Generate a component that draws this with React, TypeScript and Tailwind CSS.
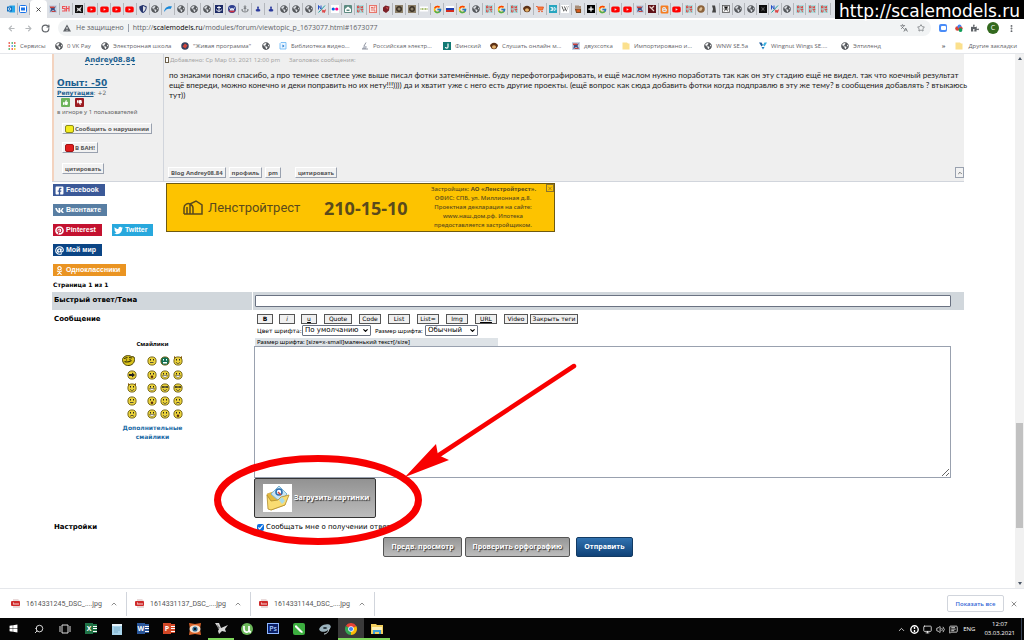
import type { ReactNode } from 'react';
import { FcGoogle } from 'react-icons/fc';
import {
  FaAnchor,
  FaArrowLeft,
  FaArrowRight,
  FaAt,
  FaBlogger,
  FaFacebookSquare,
  FaGlobeAmericas,
  FaOdnoklassniki,
  FaPinterest,
  FaPuzzlePiece,
  FaShieldAlt,
  FaThumbsDown,
  FaThumbsUp,
  FaTwitter,
  FaVk,
  FaWikipediaW,
  FaWindows,
  FaYoutube,
} from 'react-icons/fa';
import {
  ChevronDown,
  ChevronUp,
  EllipsisVertical,
  Languages,
  MessageSquareText,
  Monitor,
  RotateCw,
  Search,
  Star,
  Volume2,
  X,
} from 'lucide-react';

const tabsLeft =
  'plane sh black yt yt yt yt shield globe swoosh globe globe globe navy round anchor spade spade globe globe globe nw dots house ab red maroon gear gear scale google flag google globe ab google ab monkey cart 3d wiki hand'.split(
    ' '
  );
const tabsRight =
  'plus google yt yt plane wine blogger yt ab coin figure man globe globe cross nw globe ab ab ab'.split(
    ' '
  );

const bookmarks = [
  { icon: 'apps', label: 'Сервисы', width: 'w-[47px]' },
  { icon: 'globe', label: '0 VK Pay', width: 'w-[46px]' },
  { icon: 'globe', label: 'Электронная школа', width: 'w-[80px]' },
  { icon: 'live', label: '"Живая программа"', width: 'w-[81px]' },
  { icon: 'globe', label: '', width: 'w-[17px]' },
  { icon: 'video', label: 'Библиотека видео...', width: 'w-[82px]' },
  { icon: 'school', label: 'Российская электр...', width: 'w-[82px]' },
  { icon: 'finnish', label: 'Финский', width: 'w-[47px]' },
  { icon: 'monkey', label: 'Слушать онлайн м...', width: 'w-[82px]' },
  { icon: 'plane', label: 'двухсотка', width: 'w-[50px]' },
  { icon: 'folder', label: 'Импортировано и...', width: 'w-[82px]' },
  { icon: 'globe', label: 'WNW SE.5a', width: 'w-[55px]' },
  { icon: 'wings', label: 'Wingnut Wings SE....', width: 'w-[82px]' },
  { icon: 'globe', label: 'Элтиленд', width: 'w-[50px]' },
];

const downloads = [
  '1614331245_DSC_....jpg',
  '1614331137_DSC_....jpg',
  '1614331144_DSC_....jpg',
];

export default function App() {
  return (
    <div className="relative flex min-h-screen flex-col overflow-hidden bg-white font-['DejaVu_Sans',sans-serif] text-[7px] leading-[10px] text-black">
      <BrowserHeader />
      <div className="flex flex-1">
        <main className="min-w-0 flex-1 pr-[51px] pl-[52px]">
          <Post />
          <ShareRow />
          <p className="h-3 text-[6px] font-bold">
            <span className="pl-px">Страница 1 из 1</span>
          </p>
          <ReplyForm />
        </main>
        <Scrollbar />
      </div>
      <Downloads />
      <Taskbar />
      <Marker />
      <div className="absolute top-0 right-0 flex h-[19px] w-[189px] items-center justify-center bg-black pt-[3px] text-[17px] text-white">
        http://scalemodels.ru
      </div>
    </div>
  );
}

/* Browser */

function BrowserHeader() {
  return (
    <header className="border-b border-gray-200 font-['Open_Sans',sans-serif] text-[7px] text-[#5f6368]">
      <div className="flex h-[18px] items-center bg-[#dee1e6] pr-[193px] pl-[5px]">
        <div className="flex w-[25px]">
          <Tab kind="outlook" />
          <Tab kind="mail" />
        </div>
        <div className="flex w-[17px] items-center justify-center self-stretch rounded-t bg-white">
          <X size={7} color="#333" strokeWidth={3} />
        </div>
        <div className="flex flex-[538]">
          {tabsLeft.map((kind, index) => (
            <Tab key={index} kind={kind} />
          ))}
        </div>
        <div className="flex flex-[246]">
          {tabsRight.map((kind, index) => (
            <Tab key={index} kind={kind} />
          ))}
        </div>
      </div>

      <div className="flex h-5 items-center gap-2 pr-2 pl-2">
        <FaArrowLeft size={7} color="#b5b8bb" />
        <FaArrowRight size={7} color="#b5b8bb" className="ml-[2px]" />
        <RotateCw size={9} strokeWidth={3} className="ml-px" />
        <div className="flex h-4 flex-1 items-center rounded-full bg-[#f1f3f4] px-[5px]">
          <svg width="8" height="8" viewBox="0 0 16 16">
            <path d="M8 1l8 14H0z" fill="#5f6368" />
            <path d="M8 6v4M8 11.5v2" stroke="#fff" strokeWidth="1.8" />
          </svg>
          <span className="ml-[5px]">Не защищено</span>
          <span className="mx-[4px] h-2 w-px bg-gray-400" />
          <span>
            http://<span className="text-black">scalemodels.ru</span>
            /modules/forum/viewtopic_p_1673077.html#1673077
          </span>
          <Languages size={8} className="ml-auto" />
          <Star size={8} className="mr-px ml-[9px]" />
        </div>
        <span className="flex h-2 w-2 items-center justify-center rounded-xs bg-[#4a8cf7]">
          <span className="h-[4px] w-[5px] rounded-[1px] bg-white" />
        </span>
        <svg width="8" height="8" viewBox="0 0 8 8">
          <circle cx="2.5" cy="4.5" r="2.3" fill="#db4437" />
          <circle cx="4.5" cy="2.5" r="2" fill="#4285f4" />
          <circle cx="5.8" cy="4.2" r="1.8" fill="#db4437" />
          <circle cx="5.5" cy="6" r="1.9" fill="#0f9d58" />
        </svg>
        <FaPuzzlePiece size={8} />
        <span className="flex h-3 w-3 items-center justify-center rounded-full bg-[#33691e] text-white">
          C
        </span>
        <EllipsisVertical size={9} strokeWidth={3} />
      </div>

      <nav className="flex h-[15px] items-center pr-[7px] pl-2 text-[6px] font-medium">
        {bookmarks.map((item, index) => (
          <a
            key={index}
            href="#"
            className={`flex shrink-0 items-center gap-1 whitespace-nowrap ${item.width}`}
          >
            <Favicon kind={item.icon} />
            {item.label}
          </a>
        ))}
        <span className="ml-auto font-bold">»</span>
        <a href="#" className="ml-[10px] flex items-center gap-[5px]">
          <Favicon kind="folder" />
          Другие закладки
        </a>
      </nav>
    </header>
  );
}

function Tab({ kind }: { kind: string }) {
  return (
    <span className="flex h-3 min-w-0 flex-1 items-center justify-center border-r border-[#b4b7bc]">
      <Favicon kind={kind} />
    </span>
  );
}

function Favicon({ kind }: { kind: string }) {
  const size = 8;
  switch (kind) {
    case 'globe':
      return <FaGlobeAmericas size={size} color="#55585c" className="shrink-0" />;
    case 'yt':
      return <FaYoutube size={9} color="#f00" className="shrink-0" />;
    case 'google':
      return <FcGoogle size={9} className="shrink-0" />;
    case 'shield':
      return <FaShieldAlt size={size} color="#27366f" className="shrink-0" />;
    case 'anchor':
      return <FaAnchor size={size} color="#7d8084" className="shrink-0" />;
    case 'blogger':
      return <FaBlogger size={9} color="#f57d20" className="shrink-0" />;
  }
  return (
    <svg width={size} height={size} viewBox="0 0 16 16" className="shrink-0">
      {drawings[kind]}
    </svg>
  );
}

const drawings: Record<string, ReactNode> = {
  outlook: (
    <>
      <rect x="5" y="1" width="11" height="14" fill="#28a8ea" />
      <rect y="3" width="10" height="10" rx="1" fill="#0f6cbd" />
      <circle cx="5" cy="8" r="2.5" fill="none" stroke="#fff" strokeWidth="1.5" />
    </>
  ),
  mail: (
    <>
      <rect x="1" y="1" width="14" height="14" rx="2" fill="#fff" stroke="#1a73e8" strokeWidth="2" />
      <rect x="4" y="5" width="8" height="6" fill="#1a73e8" />
    </>
  ),
  plane: (
    <>
      <rect width="16" height="16" fill="#c9d3e2" />
      <path d="M1 3l7 3 6-4-3 6 4 6-7-4-6 4 2-6z" fill="#3c4f86" />
      <path d="M2 3h9v3H2zM5 12h8v2H5z" fill="#c8423e" />
    </>
  ),
  sh: (
    <path d="M7 3H1v4h5v5H0M9 2v11M9 7h5M14 2v11" fill="none" stroke="#ee5358" strokeWidth="2.4" />
  ),
  black: (
    <>
      <rect width="16" height="16" fill="#111" />
      <path d="M3 5l5 2 6-5-3 7 2 5-6-3-4 3 2-5z" fill="#ddd" />
    </>
  ),
  swoosh: <path d="M0 14C1 6 7 1 16 3l-3 5C8 6 4 8 0 14z" fill="#1787d8" />,
  navy: (
    <>
      <rect width="16" height="16" fill="#1d2b66" />
      <path d="M8 2v11M4 5h8M3 9c1 5 9 5 10 0" fill="none" stroke="#fff" strokeWidth="1.8" />
    </>
  ),
  round: (
    <>
      <circle cx="8" cy="8" r="8" fill="#2f3f8f" />
      <path d="M1 11h14a8 8 0 0 1-14 0z" fill="#d02f3f" />
      <path d="M3 5l3 6 2-5 2 5 3-6" fill="none" stroke="#fff" strokeWidth="1.8" />
    </>
  ),
  spade: <path d="M8 2l2 3-1 2 4 3-2 3H5l-2-3 4-3-1-2z" fill="#2b3a9c" />,
  nw: (
    <>
      <path d="M1 9V1l5 7V1" fill="none" stroke="#2350c7" strokeWidth="2" />
      <path d="M1 15L14 1" stroke="#1ba0a0" strokeWidth="2" />
      <path d="M8 9l2 6 2-5 1 5 2-6" fill="none" stroke="#d33" strokeWidth="1.8" />
    </>
  ),
  dots: (
    <>
      <rect width="16" height="16" fill="#fff" />
      <circle cx="4.5" cy="8" r="3.2" fill="#0063dc" />
      <circle cx="11.5" cy="8" r="3.2" fill="#ff0084" />
    </>
  ),
  house: (
    <>
      <rect width="16" height="16" rx="2" fill="#5c8a80" />
      <path d="M2 8l6-5 6 5v6H2z" fill="#fff" />
      <path d="M5 9h6v3H5z" fill="#5c8a80" />
    </>
  ),
  ab: (
    <>
      <rect width="16" height="16" fill="#a9dcdc" />
      <path d="M3 7V2h3v5M3 5h3M10 2v5M13 2v5M10 5h3M3 9v5h3v-5M9 9h5l-3 3 3 2" fill="none" stroke="#d9413f" strokeWidth="1.7" />
    </>
  ),
  red: (
    <>
      <rect x="1" y="1" width="14" height="14" fill="#fbe3df" stroke="#e8756b" strokeWidth="2" />
      <path d="M4 5h4M6 5v7M10 4v8M10 4h3M10 12h3" stroke="#e05a50" strokeWidth="1.6" />
    </>
  ),
  maroon: (
    <>
      <path d="M2 5l5-4 8 2-1 8-6 5-6-4z" fill="#7b2028" />
      <path d="M7 4l6 1-2 4z" fill="#c94a50" />
    </>
  ),
  gear: (
    <>
      <rect width="16" height="16" fill="#8c7f68" />
      <circle cx="8" cy="8" r="4.5" fill="none" stroke="#3b3227" strokeWidth="3" />
    </>
  ),
  scale: (
    <>
      <rect y="3" width="16" height="10" fill="#fff" />
      <path d="M1 8h14" stroke="#8dab45" strokeWidth="3" strokeDasharray="2 1" />
    </>
  ),
  flag: (
    <>
      <rect y="2" width="16" height="4" fill="#fff" />
      <rect y="6" width="16" height="4" fill="#1d3fb0" />
      <rect y="10" width="16" height="4" fill="#d52b1e" />
    </>
  ),
  monkey: (
    <>
      <circle cx="3" cy="7" r="3" fill="#7a431c" />
      <circle cx="13" cy="7" r="3" fill="#7a431c" />
      <circle cx="8" cy="8" r="6.5" fill="#5d3216" />
      <ellipse cx="8" cy="10" rx="4" ry="3.5" fill="#e6b36c" />
    </>
  ),
  cart: (
    <>
      <path d="M0 3h3l2 7h8l2-6H4" fill="#f6813e" stroke="#e84b1a" strokeWidth="1.6" />
      <circle cx="6" cy="13" r="1.6" fill="#e84b1a" />
      <circle cx="12" cy="13" r="1.6" fill="#e84b1a" />
    </>
  ),
  '3d': (
    <>
      <rect width="16" height="16" fill="#27a5bf" />
      <path d="M3 5h4v6H3M4 8h3M10 5v6c5 0 5-6 0-6z" fill="none" stroke="#fff" strokeWidth="1.6" />
    </>
  ),
  wiki: (
    <>
      <rect width="16" height="16" fill="#fff" />
      <FaWikipediaW size={16} color="#222" />
    </>
  ),
  hand: (
    <path d="M4 6V1M8 6V1M12 6V2M3 8h10v7H5z" stroke="#7a4a20" strokeWidth="2.2" fill="#d75a20" />
  ),
  plus: (
    <>
      <rect width="16" height="16" fill="#000" />
      <path d="M8 3v10M3 8h10" stroke="#fff" strokeWidth="2.5" />
    </>
  ),
  wine: (
    <>
      <rect width="16" height="16" fill="#5f1218" />
      <path d="M3 3l9 9M12 2L7 7" stroke="#e7cfc9" strokeWidth="2.4" />
    </>
  ),
  coin: (
    <>
      <circle cx="8" cy="8" r="7.5" fill="#8b623b" />
      <path d="M4 8l4-4 3 2-2 5-4 1z" fill="#e1c298" />
    </>
  ),
  figure: <path d="M4 1h6l1 5 1 9H4l2-7z" fill="#444" />,
  man: (
    <>
      <rect x="1" y="1" width="14" height="14" fill="#fff" stroke="#555" strokeWidth="1.6" />
      <path d="M4 3l4 5 4-5M8 8l-4 5M8 8l4 5M3 8h10" stroke="#333" strokeWidth="1.6" />
    </>
  ),
  cross: (
    <>
      <rect width="16" height="16" fill="#0b0b0b" />
      <path d="M4 3l4 3 4-3-2 5 2 5-4-3-4 3 2-5z" fill="#555" />
    </>
  ),
  apps: (
    <>
      <path d="M1 2h3M1 8h3" stroke="#ea4335" strokeWidth="3" />
      <path d="M7 2h3M12 8h3M1 14h3" stroke="#34a853" strokeWidth="3" />
      <path d="M12 2h3M7 14h3" stroke="#ea4335" strokeWidth="3" />
      <path d="M7 8h3" stroke="#4285f4" strokeWidth="3" />
      <path d="M12 14h3" stroke="#fbbc05" strokeWidth="3" />
    </>
  ),
  live: (
    <>
      <circle cx="8" cy="8" r="7.5" fill="#34405e" />
      <path d="M3 9l5-6 5 4-4 6z" fill="#d2453a" />
    </>
  ),
  video: (
    <>
      <path d="M4 1h10v13H2V3z" fill="#eaf5ff" stroke="#64b5f6" strokeWidth="1.6" />
      <path d="M7 5l4 3-4 3z" fill="#1976d2" />
    </>
  ),
  school: (
    <>
      <path d="M2 14l4-7 6 2-2 5z" fill="#b9bdc7" />
      <path d="M6 8l4-7M2 14h12" stroke="#767b8b" strokeWidth="1.6" />
    </>
  ),
  finnish: (
    <>
      <rect width="16" height="16" fill="#127a74" />
      <path d="M10 3v7c0 3-5 3-5 0" fill="none" stroke="#fff" strokeWidth="2.4" />
    </>
  ),
  folder: <path d="M1 1h9l2 2h3v12H1z" fill="#fbe08d" />,
  wings: (
    <>
      <path d="M0 1h5l3 5-3 3z" fill="#1f5f9f" />
      <path d="M16 1h-5L8 6l3 3z" fill="#39b0e0" />
      <path d="M5 10h6l-3 5z" fill="#1f7fc0" />
    </>
  ),
};

function Scrollbar() {
  return (
    <div className="flex w-[9px] flex-col items-center justify-between bg-[#f1f1f1] py-[3px]">
      <span className="border-x-2 border-b-[3px] border-x-transparent border-b-gray-600" />
      <div className="flex flex-1 flex-col self-stretch">
        <div className="flex-[364]" />
        <div className="mx-px flex-[105] bg-[#c1c1c1]" />
        <div className="flex-[54]" />
      </div>
      <span className="border-x-2 border-t-[3px] border-x-transparent border-t-gray-600" />
    </div>
  );
}

/* Forum */

function SmallButton({ children }: { children: ReactNode }) {
  return (
    <button
      type="button"
      className="flex h-[11px] items-center gap-px border border-t-white border-r-gray-400 border-b-gray-400 border-l-white bg-[#f2f2f2] px-[2px] font-['Noto_Sans',sans-serif] text-[6px] font-bold whitespace-nowrap text-[#555]"
    >
      {children}
    </button>
  );
}

function Post() {
  return (
    <article className="flex h-[128px] border-b border-gray-300 bg-[#efefef]">
      <div className="flex w-[112px] shrink-0 flex-col items-start border-r border-l-2 border-r-gray-300 border-l-[#f3d3bf] pl-[3px] text-[6px] text-[#666]">
        <a
          href="#"
          className="mt-[2px] self-center border-b border-dashed border-[#1c5f8f] text-[7px] leading-[8px] font-bold text-[#1c5f8f]"
        >
          Andrey08.84
        </a>
        <a href="#" className="mt-3 text-[9px] leading-3 font-bold text-[#1c5f8f] underline">
          Опыт: -50
        </a>
        <p className="leading-2">
          <a href="#" className="font-bold text-[#1c5f8f] underline">
            Репутация
          </a>
          : +2
        </p>
        <div className="mt-px flex gap-[5px] pl-1">
          <button type="button" aria-label="Плюс" className="flex h-[9px] w-[9px] items-center justify-center rounded-[1px] bg-[#6db35b]">
            <FaThumbsUp size={5} color="#fff" />
          </button>
          <button type="button" aria-label="Минус" className="flex h-[9px] w-[9px] items-center justify-center rounded-[1px] bg-[#9c1c22]">
            <FaThumbsDown size={5} color="#fff" />
          </button>
        </div>
        <p className="font-['Noto_Sans',sans-serif]">в игноре у 1 пользователей</p>
        <div className="mt-[6px] flex flex-col items-start gap-[8px] pl-[5px]">
          <SmallButton>
            <span className="h-2 w-[9px] rounded-xs border border-[#8a8a1c] bg-[#f4ec1e]" />
            Сообщить о нарушении
          </SmallButton>
          <SmallButton>
            <span className="h-2 w-[9px] rounded-xs border border-[#a01414] bg-[#e01c1c]" />В БАН!
          </SmallButton>
          <div className="mt-[2px]">
            <SmallButton>цитировать</SmallButton>
          </div>
        </div>
      </div>

      <div className="flex min-w-0 flex-1 flex-col">
        <div className="flex h-3 items-center gap-[9px] pl-px font-['Noto_Sans',sans-serif] text-[6px] text-[#a5a5a5]">
          <span className="flex items-center gap-px">
            <span className="h-[6px] w-[4px] border border-[#6b5f4a] bg-white" />
            Добавлено: Ср Мар 03, 2021 12:00 pm
          </span>
          <span>Заголовок сообщения:</span>
        </div>
        <p className="pt-1 pl-[5px] font-['Lato','Liberation_Sans',sans-serif] text-[8px] whitespace-nowrap text-[#222]">
          по знаками понял спасибо, а про темнее светлее уже выше писал фотки затемнённые. буду
          перефотографировать, и ещё маслом нужно поработать так как он эту стадию ещё не видел.
          так что коечный результат
          <br />
          ещё впереди, можно конечно и деки поправить но их нету!!!)))) да и хватит уже с него есть
          другие проекты. (ещё вопрос как сюда добавить фотки когда подправлю в эту же тему? в
          сообщения добавлять ? втыкаюсь
          <br />
          тут))
        </p>
        <div className="mt-auto mb-[3px] flex items-center gap-[3px] pl-1">
          <SmallButton>Blog Andrey08.84</SmallButton>
          <SmallButton>профиль</SmallButton>
          <SmallButton>pm</SmallButton>
          <div className="ml-[11px]">
            <SmallButton>цитировать</SmallButton>
          </div>
          <button
            type="button"
            aria-label="Наверх"
            className="ml-auto flex h-[11px] w-[9px] items-center justify-center border border-gray-400 bg-[#f2f2f2]"
          >
            <ChevronUp size={6} />
          </button>
        </div>
      </div>
    </article>
  );
}

function ShareLink({ color, icon, label }: { color: string; icon: ReactNode; label: string }) {
  return (
    <a
      href="#"
      className={`flex h-3 items-center gap-[2px] pr-[6px] pl-[2px] font-['Liberation_Sans',sans-serif] text-[7px] font-bold text-white ${color}`}
    >
      {icon}
      {label}
    </a>
  );
}

function ShareRow() {
  return (
    <div className="flex h-[98px] items-start">
      <div className="flex w-[114px] flex-col items-start gap-2 pt-[2px] pl-px">
        <ShareLink color="bg-[#3b5998]" icon={<FaFacebookSquare size={9} />} label="Facebook" />
        <ShareLink color="bg-[#587ea3]" icon={<FaVk size={9} />} label="Вконтакте" />
        <div className="flex gap-[10px]">
          <ShareLink color="bg-[#c31230]" icon={<FaPinterest size={9} />} label="Pinterest" />
          <ShareLink color="bg-[#28a8dd]" icon={<FaTwitter size={9} />} label="Twitter" />
        </div>
        <ShareLink color="bg-[#0b4585]" icon={<FaAt size={9} />} label="Мой мир" />
        <ShareLink color="bg-[#ea9422]" icon={<FaOdnoklassniki size={9} />} label="Одноклассники" />
      </div>

      {/* рекламный баннер */}
      <aside className="relative mt-px flex h-[49px] w-[389px] items-center border border-[#6f5a10] bg-[#fdc300] font-['Noto_Sans',sans-serif] text-[#5a4a1c]">
        <svg width="21" height="16" viewBox="0 0 21 16" className="ml-4 shrink-0">
          <path
            d="M1 14V8c0-4 4-5 6-4s3 2 3 4v6M4 14V7M7 14V4l6-3 6 4v9H1"
            fill="none"
            stroke="currentColor"
            strokeWidth="1.5"
          />
        </svg>
        <span className="ml-1 w-[116px] font-['Roboto',sans-serif] text-[13px]">
          Ленстройтрест
        </span>
        <span className="text-[18px] font-bold">210-15-10</span>
        <p className="ml-auto w-[123px] pr-[19px] text-center text-[6px] leading-[9px] font-medium whitespace-nowrap">
          Застройщик: <b>АО «Ленстройтрест».</b>
          <br />
          ОФИС: СПБ, ул. Миллионная д.8.
          <br />
          Проектная декларация на сайте:
          <br />
          www.наш.дом.рф. Ипотека
          <br />
          предоставляется застройщиком.
        </p>
        <button
          type="button"
          aria-label="Закрыть рекламу"
          className="absolute top-0 right-0 flex h-2 w-2 items-center justify-center border border-[#8a7430]"
        >
          <X size={7} />
        </button>
      </aside>
    </div>
  );
}

function TagButton({ className = '', children }: { className?: string; children: ReactNode }) {
  return (
    <button
      type="button"
      className={`h-[10px] border border-[#555] bg-[#f0f0f0] text-[6px] leading-[8px] whitespace-nowrap text-black ${className}`}
    >
      {children}
    </button>
  );
}

function FontSelect({ id, option, width }: { id: string; option: string; width: string }) {
  return (
    <span className={`relative flex ${width}`}>
      <select
        id={id}
        className="h-[11px] w-full appearance-none rounded-[1px] border border-gray-500 bg-white pl-[2px] text-[7px] leading-[9px]"
      >
        <option>{option}</option>
      </select>
      <ChevronDown size={7} strokeWidth={4} className="pointer-events-none absolute top-[2px] right-[2px]" />
    </span>
  );
}

function GrayButton({ children }: { children: ReactNode }) {
  return (
    <button
      type="button"
      className="h-5 rounded-xs border border-[#555] bg-linear-to-b from-[#979797] to-[#bdbdbd] px-[7px] text-[7px] text-white text-shadow-[1px_1px_1px_#333]"
    >
      {children}
    </button>
  );
}

function ReplyForm() {
  return (
    <form className="grid grid-cols-[201px_1fr]" onSubmit={(e) => e.preventDefault()}>
      <label
        htmlFor="subject"
        className="border-r border-white bg-[#d1d7dc] pt-[3px] pl-[2px] font-bold"
      >
        Быстрый ответ/Тема
      </label>
      <div className="flex h-[18px] items-center bg-[#d1d7dc] pr-[13px] pl-[2px]">
        <input
          id="subject"
          type="text"
          className="h-3 w-full rounded-[1px] border border-gray-500 bg-white px-1"
        />
      </div>

      <div className="flex flex-col">
        <label htmlFor="message" className="pt-1 pl-[2px] font-bold">
          Сообщение
        </label>
        <Smilies />
      </div>
      <div className="pr-[13px] pl-px">
        <div className="flex gap-[7px] pt-1 pl-[3px]">
          <div className="flex gap-[6px]">
            <TagButton className="w-4 font-bold">B</TagButton>
            <TagButton className="w-4 italic">i</TagButton>
            <TagButton className="w-4 underline">u</TagButton>
          </div>
          <TagButton className="w-7">Quote</TagButton>
          <TagButton className="w-[22px]">Code</TagButton>
          <TagButton className="w-[22px]">List</TagButton>
          <TagButton className="w-[22px]">List=</TagButton>
          <TagButton className="w-[22px]">Img</TagButton>
          <TagButton className="w-[22px] underline">URL</TagButton>
          <div className="flex gap-[2px]">
            <TagButton className="w-[24px]">Video</TagButton>
            <TagButton className="w-[48px]">Закрыть теги</TagButton>
          </div>
        </div>
        <div className="flex items-center pt-px pl-[3px] text-[6px] whitespace-nowrap">
          <label htmlFor="color" className="w-[45px]">
            Цвет шрифта:
          </label>
          <FontSelect id="color" option="По умолчанию" width="w-[69px]" />
          <label htmlFor="size" className="ml-1 w-[50px] font-['Noto_Sans',sans-serif]">
            Размер шрифта:
          </label>
          <FontSelect id="size" option="Обычный" width="w-[53px]" />
        </div>
        <p className="mt-[2px] ml-px h-2 w-[243px] bg-[#dee3e7] pl-[2px] font-['Noto_Sans',sans-serif] text-[6px] leading-2">
          Размер шрифта: [size=x-small]маленький текст[/size]
        </p>
        <textarea id="message" className="block h-[132px] w-full border border-gray-400 bg-white p-1" />
        <button
          type="button"
          className="flex h-10 w-[122px] items-center gap-[2px] rounded-xs border border-[#333] bg-linear-to-b from-[#929292] to-[#bcbcbc] pl-2 font-['Open_Sans',sans-serif] text-[7px] font-bold whitespace-nowrap text-white text-shadow-[1px_1px_1px_#333]"
        >
          <span className="flex h-7 w-[29px] shrink-0 items-center justify-center bg-white">
            <FolderIcon />
          </span>
          Загрузить картинки
        </button>
      </div>

      <div className="pt-1 pl-[2px] font-bold">Настройки</div>
      <label className="flex items-center gap-[2px] pt-1 pl-1">
        <input type="checkbox" defaultChecked className="h-[7px] w-[7px] accent-[#0b6fe0]" />
        Сообщать мне о получении ответа
      </label>

      <div className="col-span-2 flex justify-center gap-[3px] pt-[5px] font-['Open_Sans',sans-serif] font-bold">
        <GrayButton>Предв. просмотр</GrayButton>
        <GrayButton>Проверить орфографию</GrayButton>
        <button
          type="submit"
          className="ml-[3px] h-5 rounded-xs border border-[#123a63] bg-linear-to-b from-[#3172b0] to-[#0f4278] px-[7px] text-[7px] text-white"
        >
          Отправить
        </button>
      </div>
    </form>
  );
}

function FolderIcon() {
  return (
    <svg width="25" height="26" viewBox="0 0 25 26">
      <path d="M2 9l6-2 2 2 9-2 1 13-14 5z" fill="#e3b83c" stroke="#c9a544" strokeWidth=".7" />
      <path d="M14 1l8 8-7 8-9-8z" fill="#c9e4f3" stroke="#7db4d0" />
      <circle cx="14" cy="7" r="3" fill="#fff" stroke="#2b6db0" strokeWidth="1.6" />
      <path d="M13 7l3 3" stroke="#d2453a" strokeWidth="1.5" />
      <path d="M2 10l1 14 3 1 14-5 4-10-8 2-3 3-7 1z" fill="#f9dc72" stroke="#b08c2a" strokeWidth=".8" />
      <path d="M17 12l3 4-3 3-3-4z" fill="#a9dbe8" />
    </svg>
  );
}

type Mood = 'smile' | 'grin' | 'sad' | 'oh' | 'flat' | 'cool' | 'arrow' | 'devil' | 'green' | 'big';

const smilies: Mood[] = [
  'big', 'flat', 'green', 'devil',
  'arrow', 'oh', 'grin', 'grin',
  'devil', 'grin', 'cool', 'cool',
  'flat', 'oh', 'smile', 'sad',
  'sad', 'grin', 'smile', 'oh',
];

function Smilies() {
  return (
    <div className="flex flex-col items-center pt-[15px] font-bold">
      <p className="font-['Noto_Sans',sans-serif] text-[6px]">Смайлики</p>
      <div className="mt-[5px] grid grid-cols-[26px_13px_13px_13px] items-center justify-items-center gap-y-[3px] pr-[2px]">
        {smilies.map((mood, index) => (
          <button key={index} type="button" aria-label={mood}>
            <Smiley mood={mood} />
          </button>
        ))}
      </div>
      <a href="#" className="mt-[4px] w-20 text-center text-[6px] leading-[9px] text-[#1c6ba5]">
        Дополнительные смайлики
      </a>
    </div>
  );
}

function Smiley({ mood }: { mood: Mood }) {
  if (mood === 'big') {
    return (
      <svg width="13" height="13" viewBox="0 0 26 26" className="mr-[7px] block">
        <path d="M1 11C2 4 12 1 19 5l5 1c3 6 0 16-10 17C6 24 1 18 1 11z" fill="#d9c21c" stroke="#4b4208" strokeWidth="2" />
        <path d="M4 9l7-2M14 7l6 1M5 15c5 2 9 1 14-2M9 11v2M16 10v2" fill="none" stroke="#3a3305" strokeWidth="2.2" />
      </svg>
    );
  }
  return (
    <svg width="10" height="10" viewBox="0 0 20 20" className="block">
      {mood === 'devil' && <path d="M2 8V0l6 4zM18 8V0l-6 4z" fill="#8a5a10" />}
      <circle cx="10" cy="10" r="8.2" fill={mood === 'green' ? '#0c7257' : '#ecd33a'} stroke="#6b5c10" strokeWidth="1.8" />
      {mood === 'arrow' ? (
        <path d="M4 8h6V5l6 5-6 5v-3H4z" fill="#222" />
      ) : (
        <>
          {mood === 'cool' ? (
            <path d="M4 7h5v2H4zM11 7h5v2h-5z" fill="#222" stroke="#222" />
          ) : (
            <path d="M7 6v3M13 6v3" stroke={mood === 'green' ? '#fff' : '#222'} strokeWidth="2" />
          )}
          {mood === 'flat' && <path d="M6 13h7" stroke="#333" strokeWidth="1.6" />}
          {mood === 'sad' && <path d="M6 15c2-3 6-3 8 0" fill="none" stroke="#333" strokeWidth="1.6" />}
          {mood === 'oh' && <circle cx="10" cy="13.5" r="2.6" fill="#5b2d0d" />}
          {mood === 'green' && <path d="M6 12h8v3H6z" fill="#fff" />}
          {mood === 'grin' && <path d="M5 11h10c-1 5-9 5-10 0z" fill="#fff" stroke="#333" />}
          {(mood === 'smile' || mood === 'cool' || mood === 'devil') && (
            <path d="M6 12c2 4 6 4 8 0" fill="none" stroke="#333" strokeWidth="1.6" />
          )}
        </>
      )}
    </svg>
  );
}

/* Красная пометка поверх страницы */
function Marker() {
  return (
    <svg
      width="364"
      height="186"
      viewBox="0 0 364 186"
      className="pointer-events-none absolute top-[362px] left-[214px]"
    >
      <ellipse cx="104" cy="138" rx="100.5" ry="41.5" fill="none" stroke="#f80000" strokeWidth="7" />
      <path d="M360 4L222 95" stroke="#f80000" strokeWidth="4.5" strokeLinecap="round" />
      <path d="M191 115L222 82l2 11 11 5z" fill="#f80000" />
    </svg>
  );
}

/* Downloads and taskbar */

function Downloads() {
  return (
    <div className="flex h-[30px] items-center border-t border-gray-200 pr-[6px] pl-[3px] font-['Open_Sans',sans-serif] text-[7px] text-[#555]">
      {downloads.map((name) => (
        <div key={name} className="flex h-6 w-[124px] items-center border-r border-gray-300 pl-2">
          <svg width="9" height="9" viewBox="0 0 9 9">
            <path d="M2 0h5l2 2v7H2z" fill="#e9dada" />
            <rect y="2" width="9" height="5" rx="1" fill="#cf2a2a" />
            <path d="M2 4h1v2M5 4v2M7 4v2" stroke="#fff" strokeWidth=".8" fill="none" />
          </svg>
          <span className="ml-[6px] flex-1 font-['Roboto',sans-serif] whitespace-nowrap">{name}</span>
          <ChevronUp size={8} className="mr-2" />
        </div>
      ))}
      <button
        type="button"
        className="ml-auto h-[17px] w-[57px] rounded-xs border border-gray-300 text-[6px] font-semibold text-[#3367d6]"
      >
        Показать все
      </button>
      <button type="button" aria-label="Закрыть" className="ml-[6px]">
        <X size={8} />
      </button>
    </div>
  );
}

const taskIcons: { name: string; icon: ReactNode; state?: string }[] = [
  { name: 'Пуск', icon: <FaWindows size={9} /> },
  { name: 'Поиск', icon: <Search size={10} className="-scale-x-100" /> },
  {
    name: 'Представление задач',
    icon: (
      <svg width="12" height="10" viewBox="0 0 12 10" fill="none" stroke="#ddd">
        <path d="M3 1h6v8H3zM1 2v6M11 2v6" />
      </svg>
    ),
  },
  { name: 'Excel', icon: <OfficeIcon color="bg-[#1f7246]" letter="X" /> },
  {
    name: 'Блокнот',
    icon: (
      <svg width="10" height="12" viewBox="0 0 10 12">
        <path d="M0 1h10v11H0z" fill="#a7d3ea" />
        <path d="M0 1h10v2H0z" fill="#e8f4fa" />
        <path d="M2 5h6M2 7h6M2 9h4" stroke="#6b9dbb" strokeWidth=".7" />
      </svg>
    ),
  },
  { name: 'Word', icon: <OfficeIcon color="bg-[#2a5699]" letter="W" /> },
  { name: 'PowerPoint', icon: <OfficeIcon color="bg-[#d24726]" letter="P" /> },
  {
    name: 'Просмотр',
    icon: (
      <svg width="12" height="12" viewBox="0 0 12 12">
        <path d="M0 0l6 1 6-1-1 6 1 6-6-1-6 1 1-6z" fill="#d9642a" />
        <ellipse cx="6" cy="6" rx="5.5" ry="3.8" fill="#f5e6d6" />
        <circle cx="6" cy="6" r="2.6" fill="#2b6690" />
        <circle cx="6" cy="6" r="1" fill="#000" />
      </svg>
    ),
  },
  {
    name: 'Самолёты',
    state: 'border-[#7fd85c]',
    icon: (
      <svg width="13" height="12" viewBox="0 0 13 12">
        <path d="M0 0h4l2 5 7-3-3 4 1 3-4-1-3 3-1-3 1-2z" fill="#d5d5d5" />
        <path d="M2 1l3 4-2 1z" fill="#777" />
      </svg>
    ),
  },
  {
    name: 'uTorrent',
    icon: (
      <svg width="12" height="12" viewBox="0 0 12 12">
        <circle cx="6" cy="6" r="6" fill="#6cb85a" />
        <path d="M3 3v3c0 4 5 4 5 1V3M8 7c0 2 1 2 2 2" fill="none" stroke="#fff" strokeWidth="1.7" />
      </svg>
    ),
  },
  {
    name: 'Photoshop',
    icon: (
      <span className="flex h-[11px] w-[12px] items-center justify-center border border-[#8fb8ff] bg-[#0a1f66] text-[7px] font-semibold text-[#a8caff]">
        Ps
      </span>
    ),
  },
  {
    name: 'CorelDRAW',
    icon: (
      <svg width="12" height="12" viewBox="0 0 12 12">
        <rect width="12" height="12" rx="2" fill="#3cae3f" />
        <path d="M2 3l1-1 7 7-1 1-2-1-5-5z" fill="#fff" />
      </svg>
    ),
  },
  {
    name: 'Диск',
    icon: (
      <svg width="13" height="12" viewBox="0 0 13 12">
        <ellipse cx="6" cy="5" rx="6" ry="3.4" fill="#9bb3bd" transform="rotate(-20 6 5)" />
        <ellipse cx="6" cy="5" rx="2" ry="1" fill="#26343b" />
        <path d="M5 11c3 0 5-3 5-6" stroke="#c9d6db" fill="none" />
      </svg>
    ),
  },
  {
    name: 'Chrome',
    state: 'border-[#7fd85c] bg-[#3a3a3a]',
    icon: (
      <svg width="12" height="12" viewBox="0 0 12 12">
        <path d="M6 6L.8 3a6 6 0 0 1 10.4 0z" fill="#ea4335" />
        <path d="M6 6L.8 3a6 6 0 0 0 5.2 9z" fill="#34a853" />
        <path d="M6 6h0l5.2-3A6 6 0 0 1 6 12z" fill="#fbbc05" />
        <circle cx="6" cy="6" r="2.8" fill="#fff" />
        <circle cx="6" cy="6" r="2.1" fill="#4285f4" />
      </svg>
    ),
  },
  {
    name: 'Проводник',
    state: 'border-[#7fd85c]',
    icon: (
      <svg width="12" height="10" viewBox="0 0 12 10">
        <path d="M0 0h5l1 1h6v9H0z" fill="#f3cf5e" />
        <path d="M1 3h10v3H1z" fill="#fdf0b8" />
        <path d="M2 6h8v4H8V8H4v2H2z" fill="#3f9fd8" />
      </svg>
    ),
  },
];

function OfficeIcon({ color, letter }: { color: string; letter: string }) {
  return (
    <span className="flex h-[10px] items-center">
      <span className={`flex h-[11px] w-2 items-center justify-center text-[7px] font-bold text-white ${color}`}>
        {letter}
      </span>
      <span className={`flex h-[9px] w-1 flex-col justify-evenly ${color}`}>
        <span className="h-px bg-white" />
        <span className="h-px bg-white" />
        <span className="h-px bg-white" />
      </span>
    </span>
  );
}

function Taskbar() {
  return (
    <footer className="flex h-[22px] items-center bg-[#050505] font-['Open_Sans',sans-serif] text-[7px] text-white">
      {taskIcons.map(({ name, icon, state }) => (
        <button
          key={name}
          type="button"
          aria-label={name}
          className={`flex w-[26px] items-center justify-center self-stretch border-b-2 pt-px ${state ?? 'border-transparent'}`}
        >
          {icon}
        </button>
      ))}
      <div className="ml-auto flex items-center gap-1">
        <ChevronUp size={9} />
        <svg width="9" height="9" viewBox="0 0 9 9">
          <circle cx="4.5" cy="4.5" r="3.7" fill="none" stroke="#fff" strokeWidth="1.4" />
          <path d="M4.5 2v2M4.5 5v2" stroke="#fff" strokeWidth="1.4" />
        </svg>
        <Monitor size={9} />
        <Volume2 size={9} />
        <MessageSquareText size={9} />
        <span className="ml-px text-[6px]">ENG</span>
        <span className="ml-[5px] flex flex-col text-center text-[6px] leading-[9px]">
          <span>12:07</span>
          <span>03.03.2021</span>
        </span>
      </div>
      <span className="mr-[2px] ml-[6px] h-full w-px bg-gray-700" />
    </footer>
  );
}
